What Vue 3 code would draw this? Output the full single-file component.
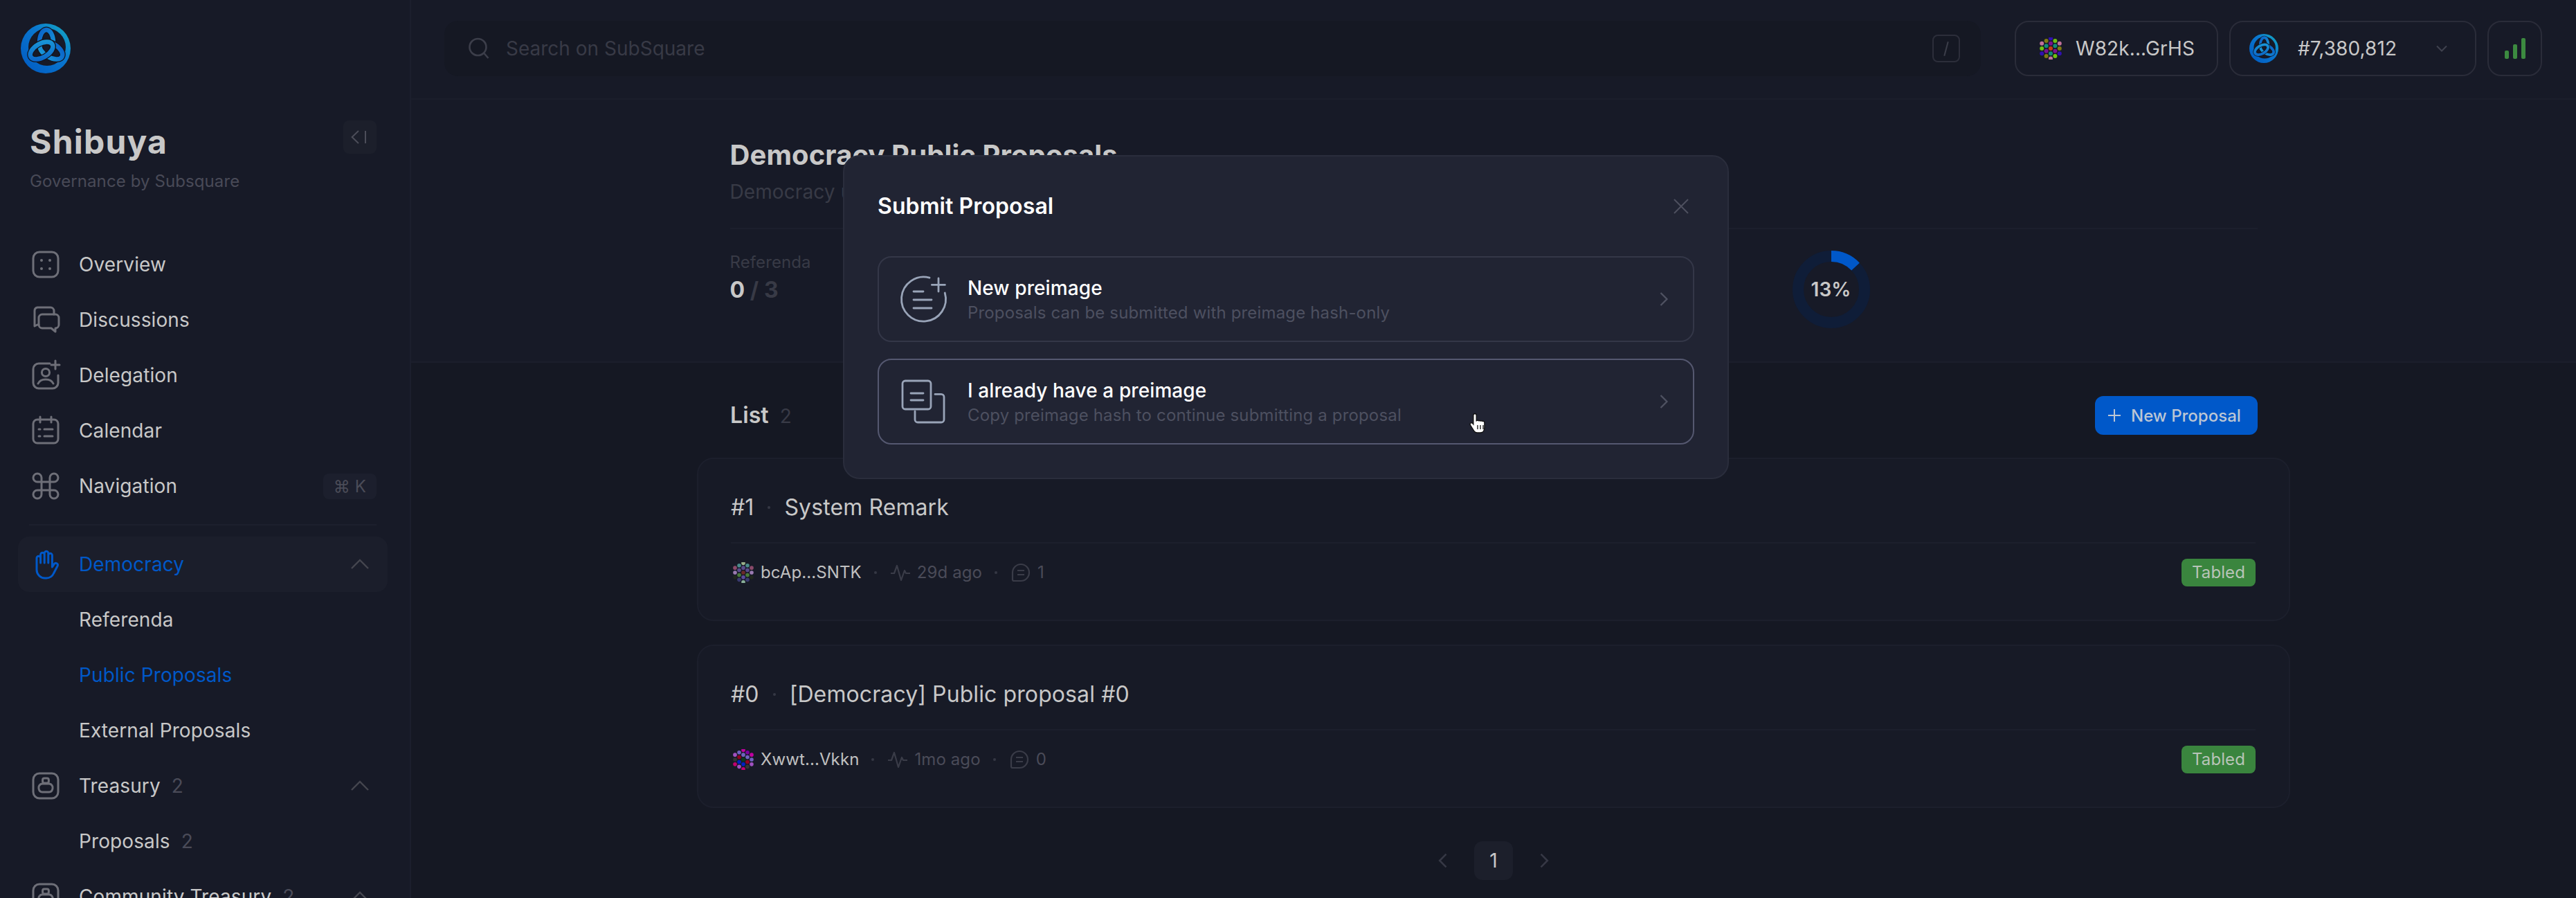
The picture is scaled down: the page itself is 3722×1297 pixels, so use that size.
<template>
  <div class="app">
    <aside class="sidebar">
      <svg class="logo" viewBox="0 0 72 72">
        <defs>
          <linearGradient id="ring" x1="0" y1="1" x2="1" y2="0">
            <stop offset="0" stop-color="#0058c0" />
            <stop offset="0.6" stop-color="#0a78d0" />
            <stop offset="1" stop-color="#16b0c0" />
          </linearGradient>
          <linearGradient id="loop" x1="0" y1="0" x2="1" y2="1">
            <stop offset="0" stop-color="#0a62c8" />
            <stop offset="1" stop-color="#1a9ad8" />
          </linearGradient>
        </defs>
        <path
          fill="url(#ring)" fill-rule="evenodd"
          d="M36 0a36 36 0 1 0 0 72a36 36 0 1 0 0-72ZM38 7a27 27 0 1 1 0 54a27 27 0 1 1 0-54Z"
        />
        <g fill="none">
          <g v-for="a in [0, 120, 240]" :key="a" :transform="`rotate(${a} 37 35)`">
            <ellipse cx="37" cy="27" rx="10" ry="18" stroke="#12141f" stroke-width="9" />
            <ellipse cx="37" cy="27" rx="10" ry="18" stroke="url(#loop)" stroke-width="6.500" />
          </g>
        </g>
      </svg>

      <div class="brand">
        <div>
          <div class="brand-name">Shibuya</div>
          <div class="brand-sub">Governance by Subsquare</div>
        </div>
        <button class="collapse">
          <svg viewBox="0 0 24 24" width="32" height="32" fill="none" stroke="#4c4d59" stroke-width="1.500">
            <path d="M10.500 5.250 3.500 12l7 6.750M18 5.250v13.500" />
          </svg>
        </button>
      </div>

      <nav class="nav">
        <div class="row">
          <svg class="icon" viewBox="0 0 24 24">
            <rect x="3" y="3" width="18" height="18" rx="4.500" />
            <circle cx="9" cy="9" r="1" class="solid" />
            <circle cx="15" cy="9" r="1" class="solid" />
            <circle cx="9" cy="15" r="1" class="solid" />
            <circle cx="15" cy="15" r="1" class="solid" />
          </svg>
          <span>Overview</span>
        </div>
        <div class="row">
          <svg class="icon" viewBox="0 0 24 24">
            <path d="M7 15.500H6l-2 1V5.500A2.500 2.500 0 0 1 6 3h9.500A2.500 2.500 0 0 1 18 5.500V8" />
            <path d="M9.500 8H19a2.500 2.500 0 0 1 2.500 2.500v5A2.500 2.500 0 0 1 19 18v2.500L16 18H9.500A2.500 2.500 0 0 1 7 15.500v-5A2.500 2.500 0 0 1 9.500 8Z" />
          </svg>
          <span>Discussions</span>
        </div>
        <div class="row">
          <svg class="icon" viewBox="0 0 24 24">
            <path d="M15 3.500H7A4 4 0 0 0 3 7.500v10a4 4 0 0 0 4 4h10a4 4 0 0 0 4-4V12" />
            <circle cx="12" cy="10" r="2.800" />
            <path d="M6.500 18c1-2.200 3-3 5.500-3s4.500.8 5.500 3" />
            <path d="M19 1.500v6M16 4.500h6" />
          </svg>
          <span>Delegation</span>
        </div>
        <div class="row">
          <svg class="icon" viewBox="0 0 24 24">
            <rect x="3" y="4" width="18" height="17" rx="3" />
            <path d="M8 2v4M16 2v4M11 11h6M11 16h6M7 11h1M7 16h1" />
          </svg>
          <span>Calendar</span>
        </div>
        <div class="row">
          <svg class="icon" viewBox="0 0 24 24">
            <path d="M15 6v12a3 3 0 1 0 3-3H6a3 3 0 1 0 3 3V6a3 3 0 1 0-3 3h12a3 3 0 1 0-3-3" />
          </svg>
          <span>Navigation</span>
          <span class="kbd">⌘ K</span>
        </div>

        <div class="nav-divider"></div>

        <div class="row active">
          <svg class="icon" viewBox="0 0 24 24">
            <path d="M5.500 15V7.500a1.400 1.400 0 0 1 2.800 0V11M8.300 11V5a1.400 1.400 0 0 1 2.800 0v6M11.100 11V4a1.400 1.400 0 0 1 2.800 0v7M13.900 11V5.500a1.400 1.400 0 0 1 2.800 0V14l1.500-2.300a1.400 1.400 0 0 1 2.400 1.400l-2.800 5.400A6 6 0 0 1 12.500 22h-1A6 6 0 0 1 5.500 16v-1" />
          </svg>
          <span>Democracy</span>
          <svg class="chevron" viewBox="0 0 24 24"><path d="m6 15 6-6 6 6" /></svg>
        </div>
        <div class="row sub">Referenda</div>
        <div class="row sub current">Public Proposals</div>
        <div class="row sub">External Proposals</div>

        <div class="row">
          <svg class="icon" viewBox="0 0 24 24">
            <rect x="3" y="3" width="18" height="18" rx="4.500" />
            <rect x="9.800" y="6.500" width="4.400" height="3.500" rx="1.200" />
            <path d="M9.500 10.500h5a2.800 2.800 0 0 1 2.500 3.500c-.3 1.500-1.200 2.500-2.500 2.500h-5C8.200 16.500 7.300 15.500 7 14a2.800 2.800 0 0 1 2.500-3.500Z" />
          </svg>
          <span>Treasury</span>
          <span class="count">2</span>
          <svg class="chevron" viewBox="0 0 24 24"><path d="m6 15 6-6 6 6" /></svg>
        </div>
        <div class="row sub">Proposals<span class="count">2</span></div>

        <div class="row">
          <svg class="icon" viewBox="0 0 24 24">
            <rect x="3" y="3" width="18" height="18" rx="4.500" />
            <rect x="9.800" y="6.500" width="4.400" height="3.500" rx="1.200" />
            <path d="M9.500 10.500h5a2.800 2.800 0 0 1 2.500 3.500c-.3 1.500-1.200 2.500-2.500 2.500h-5C8.200 16.500 7.300 15.500 7 14a2.800 2.800 0 0 1 2.500-3.500Z" />
          </svg>
          <span>Community Treasury</span>
          <span class="count">2</span>
          <svg class="chevron" viewBox="0 0 24 24"><path d="m6 15 6-6 6 6" /></svg>
        </div>
      </nav>
    </aside>

    <div class="main">
      <header class="topbar">
        <div class="search">
          <svg viewBox="0 0 32 32" width="32" height="32" fill="none" stroke="#3c3e4a" stroke-width="2.600">
            <circle cx="14.500" cy="14" r="12" />
            <path d="m23.500 23 6 7" />
          </svg>
          <span class="search-text">Search on SubSquare</span>
          <span class="slash"><i></i></span>
        </div>
        <div class="top-btn wallet">
          <svg class="avatar-lg" viewBox="0 0 32 32">
            <circle v-for="(d, i) in walletDots" :key="i" :cx="d.x" :cy="d.y" r="3" :fill="d.color" />
          </svg>
          <span>W82k...GrHS</span>
        </div>
        <div class="top-btn node">
          <svg class="node-logo" viewBox="0 0 72 72">
            <path
              fill="url(#ring)" fill-rule="evenodd"
              d="M36 0a36 36 0 1 0 0 72a36 36 0 1 0 0-72ZM38 7a27 27 0 1 1 0 54a27 27 0 1 1 0-54Z"
            />
            <g fill="none">
              <g v-for="a in [0, 120, 240]" :key="a" :transform="`rotate(${a} 37 35)`">
                <ellipse cx="37" cy="27" rx="10" ry="18" stroke="#12141f" stroke-width="9" />
                <ellipse cx="37" cy="27" rx="10" ry="18" stroke="url(#loop)" stroke-width="6.500" />
              </g>
            </g>
          </svg>
          <span>#7,380,812</span>
          <svg class="node-caret" viewBox="0 0 24 24" fill="none" stroke="#3f414e" stroke-width="2">
            <path d="m5 8.500 7 7 7-7" />
          </svg>
        </div>
        <div class="top-btn signal">
          <i style="height: 12px"></i>
          <i style="height: 21px"></i>
          <i style="height: 30px"></i>
        </div>
      </header>

      <section class="hero">
        <div class="hero-inner">
          <h1>Democracy Public Proposals</h1>
          <p class="hero-sub">Democracy uses public proposals, external proposals and referendums.</p>
          <div class="stats">
            <div>
              <div class="stat-label">Referenda</div>
              <div class="stat-value">0<span> / 3</span></div>
            </div>
            <div class="ring">
              <svg viewBox="0 0 112 112" width="112" height="112">
                <circle cx="56" cy="56" r="48" fill="none" stroke="#0f1d38" stroke-width="16" />
                <circle
                  cx="56" cy="56" r="48" fill="none" stroke="#0058c9" stroke-width="16"
                  pathLength="100" stroke-dasharray="13 87" transform="rotate(-90 56 56)"
                />
              </svg>
              <span>13%</span>
            </div>
          </div>
        </div>
      </section>

      <section class="list">
        <div class="list-head">
          <div class="list-title">List<span>2</span></div>
          <button class="new-btn">
            <svg viewBox="0 0 24 24" width="24" height="24" fill="none" stroke="#bcc6d4" stroke-width="2">
              <path d="M12 3v18M3 12h18" />
            </svg>
            New Proposal
          </button>
        </div>

        <article v-for="p in proposals" :key="p.id" class="card">
          <div class="card-title">
            <span>#{{ p.id }}</span><i class="dot"></i><span>{{ p.title }}</span>
          </div>
          <div class="card-meta">
            <svg class="avatar" viewBox="0 0 32 32">
              <circle v-for="(d, i) in p.dots" :key="i" :cx="d.x" :cy="d.y" r="3" :fill="d.color" />
            </svg>
            <span class="author">{{ p.author }}</span>
            <i class="dot"></i>
            <svg class="meta-icon" viewBox="0 0 32 32">
              <path d="M2 17h5l4-11 6 21 5-14 2 4h6" />
            </svg>
            <span>{{ p.time }}</span>
            <i class="dot"></i>
            <svg class="meta-icon" viewBox="0 0 32 32">
              <path d="M16 4a12 12 0 0 1 0 24H6a2 2 0 0 1-2-2V16A12 12 0 0 1 16 4ZM11 13h10M11 19h10" />
            </svg>
            <span>{{ p.comments }}</span>
            <span class="tag">Tabled</span>
          </div>
        </article>

        <div class="pager">
          <svg viewBox="0 0 24 24" width="28" height="28" fill="none" stroke="#363845" stroke-width="2.200">
            <path d="m15 4-8 8 8 8" />
          </svg>
          <span class="page">1</span>
          <svg viewBox="0 0 24 24" width="28" height="28" fill="none" stroke="#363845" stroke-width="2.200">
            <path d="m9 4 8 8-8 8" />
          </svg>
        </div>
      </section>
    </div>

    <div class="modal">
      <div class="modal-head">
        <span>Submit Proposal</span>
        <svg viewBox="0 0 24 24" width="24" height="24" fill="none" stroke="#4e505f" stroke-width="2">
          <path d="m2 2 20 20M22 2 2 22" />
        </svg>
      </div>
      <div class="option">
        <svg class="option-icon" viewBox="0 0 40 40">
          <path d="M24.500 4.600A16 16 0 1 0 35.600 15.500" />
          <path d="M31 5v9.500M26.200 9.700h9.500M13 14.500h7M13 20.500h13M13 26.500h13" />
        </svg>
        <div class="option-text">
          <div class="option-title">New preimage</div>
          <div class="option-sub">Proposals can be submitted with preimage hash-only</div>
        </div>
        <svg class="option-arrow" viewBox="0 0 24 24"><path d="m9 6 6 6-6 6" /></svg>
      </div>
      <div class="option hover">
        <svg class="option-icon" viewBox="0 0 40 40">
          <rect x="5" y="5" width="20.500" height="20.500" rx="2" />
          <path d="M28.500 14.700H33a2 2 0 0 1 2 2V33a2 2 0 0 1-2 2H16a2 2 0 0 1-2-2v-6M11 14h9M11 19h9" />
        </svg>
        <div class="option-text">
          <div class="option-title">I already have a preimage</div>
          <div class="option-sub">Copy preimage hash to continue submitting a proposal</div>
        </div>
        <svg class="option-arrow" viewBox="0 0 24 24"><path d="m9 6 6 6-6 6" /></svg>
      </div>
    </div>

    <svg class="cursor" viewBox="0 0 28 32">
      <path
        d="M9 2.500c1.300 0 2.200 1 2.200 2.200v8l1.300-.4c1-.3 2 0 2.400.5.900-.5 2-.4 2.700.3.900-.5 2.100-.3 2.800.4 1-.4 2.500.3 2.500 1.800v7c0 4-2 7.700-6 7.700h-4.500c-2.200 0-3.600-1-4.700-2.700L2.500 19c-.8-1.300-.4-2.500.5-3 .9-.5 2-.3 2.800.6l1 1.200V4.700C6.800 3.500 7.700 2.500 9 2.500Z"
        fill="#fff" stroke="#111" stroke-width="1.400"
      />
      <path d="M13 19v6M17 19v6M21 19v6" stroke="#111" stroke-width="1.300" />
    </svg>
  </div>
</template>

<script setup>
// Polkadot style identicon: five columns of 3, 4, 5, 4, 3 dots
const columns = [
  { x: 3.2, ys: [8.7, 16, 23.3] },
  { x: 9.6, ys: [5, 12.3, 19.7, 27] },
  { x: 16, ys: [1.4, 8.7, 16, 23.3, 30.6] },
  { x: 22.4, ys: [5, 12.3, 19.7, 27] },
  { x: 28.8, ys: [8.7, 16, 23.3] },
]

function makeDots(colors) {
  const positions = columns.flatMap((c) => c.ys.map((y) => ({ x: c.x, y })))
  return positions.map((p, i) => ({ ...p, color: colors[i] }))
}

const walletDots = makeDots([
  '#c0709a', '#6fc010', '#3010b0',
  '#7f7a10', '#108a78', '#7a1090', '#7f7a10',
  '#3010b0', '#7a1090', '#c83a10', '#108a78', '#c0709a',
  '#6fc010', '#108a78', '#7a1090', '#6fc010',
  '#c0709a', '#7f7a10', '#3010b0',
])

const proposals = [
  {
    id: 1,
    title: 'System Remark',
    author: 'bcAp...SNTK',
    time: '29d ago',
    comments: 1,
    dots: makeDots([
      '#8a4a6a', '#9a7ab0', '#20281c',
      '#4a8a8a', '#5a4a8a', '#4a7a3a', '#3a3a70',
      '#9ab08a', '#5a4a8a', '#6a2a2a', '#5a4a9a', '#8ab09a',
      '#4a8a8a', '#5a4a8a', '#4a7a3a', '#3a3a70',
      '#8a4a6a', '#9a7ab0', '#20281c',
    ]),
  },
  {
    id: 0,
    title: '[Democracy] Public proposal #0',
    author: 'Xwwt...Vkkn',
    time: '1mo ago',
    comments: 0,
    dots: makeDots([
      '#a050c0', '#333333', '#c00070',
      '#7060c0', '#900020', '#0020c0', '#a050c0',
      '#c000a0', '#7060c0', '#0a3a1a', '#0020c0', '#c00070',
      '#7a00a0', '#7060c0', '#900020', '#333333',
      '#c000a0', '#7060c0', '#a050c0',
    ]),
  },
]
</script>

<style>
html,
body {
  margin: 0;
  background: #151823;
}
</style>

<style scoped>
.app {
  position: relative;
  display: flex;
  width: 3722px;
  height: 1297px;
  overflow: hidden;
  background: #151823;
  color: #c8c8c8;
  font-family: Inter, 'Liberation Sans', sans-serif;
  font-size: 28px;
  letter-spacing: 0.1px;
}

/* sidebar */
.sidebar {
  box-sizing: border-box;
  flex: none;
  width: 594px;
  padding: 34px 32px 0 26px;
  background: #171a27;
  border-right: 2px solid #1c1f2d;
}
.logo {
  display: block;
  width: 72px;
  height: 72px;
  margin-left: 4px;
}
.brand {
  display: flex;
  align-items: flex-start;
  justify-content: space-between;
  margin-top: 71px;
  padding: 0 16px 0 17px;
}
.brand-name {
  font-size: 48px;
  font-weight: 700;
  line-height: 56px;
  letter-spacing: 1.2px;
  color: #c8c8c8;
}
.brand-sub {
  margin-top: 13px;
  font-size: 24px;
  line-height: 32px;
  color: #494a57;
}
.collapse {
  display: flex;
  align-items: center;
  justify-content: center;
  width: 48px;
  height: 48px;
  margin-top: -3px;
  padding: 0;
  background: #1c1f2b;
  border: 0;
  border-radius: 8px;
}
.nav {
  margin-top: 64px;
}
.row {
  display: flex;
  align-items: center;
  box-sizing: border-box;
  height: 80px;
  padding: 0 16px;
  line-height: 40px;
  white-space: nowrap;
}
.row .icon {
  flex: none;
  width: 48px;
  height: 48px;
  margin-right: 24px;
  fill: none;
  stroke: #6e6f78;
  stroke-width: 1.5;
  stroke-linecap: round;
  stroke-linejoin: round;
}
.row .icon .solid {
  fill: #6e6f78;
  stroke: none;
}
.row.sub {
  padding-left: 88px;
}
.row.active {
  background: #1b1e2b;
  border-radius: 16px;
  color: #0058c8;
}
.row.active .icon {
  stroke: #0058c8;
}
.nav-divider {
  height: 2px;
  margin: 15px 16px 16px;
  background: #1c1f2d;
}
.row.current {
  color: #0058c8;
}
.count {
  margin-left: 16px;
  color: #4a4b58;
}
.kbd {
  margin-left: auto;
  padding: 0 15px;
  background: #1c1f2d;
  border-radius: 8px;
  font-size: 24px;
  line-height: 37px;
  color: #4b4c58;
}
.chevron {
  flex: none;
  width: 48px;
  height: 48px;
  margin-left: auto;
  fill: none;
  stroke: #45464f;
  stroke-width: 1.2;
}

/* top bar */
.main {
  flex: 1;
  min-width: 0;
}
.topbar {
  display: flex;
  gap: 16px;
  box-sizing: border-box;
  height: 144px;
  padding: 30px 49px 0 48px;
  background: #171a27;
  border-bottom: 2px solid #1b1e2b;
}
.search {
  display: flex;
  align-items: center;
  box-sizing: border-box;
  width: 2220px;
  height: 80px;
  margin-right: 33px;
  padding: 0 30px 0 34px;
  background: #151823;
  border-radius: 20px;
}
.search-text {
  margin-left: 23px;
  letter-spacing: 0;
  color: #383a46;
}
.slash {
  display: flex;
  align-items: center;
  justify-content: center;
  box-sizing: border-box;
  width: 40px;
  height: 40px;
  margin-left: auto;
  border: 2px solid #2c2e3a;
  border-radius: 8px;
}
.slash i {
  width: 2px;
  height: 21px;
  background: #3c3e4a;
  transform: rotate(15deg);
}
.top-btn {
  display: flex;
  align-items: center;
  box-sizing: border-box;
  height: 80px;
  border: 2px solid #2a2c39;
  border-radius: 20px;
}
.wallet {
  gap: 20px;
  width: 294px;
  padding-left: 34px;
}
.avatar-lg {
  width: 32px;
  height: 32px;
}
.node {
  width: 357px;
  padding-left: 27px;
}
.node-logo {
  width: 42px;
  height: 42px;
  margin-right: 28px;
}
.node-caret {
  width: 24px;
  height: 24px;
  margin-left: auto;
  margin-right: 36px;
}
.signal {
  justify-content: center;
  align-items: flex-end;
  gap: 6px;
  width: 79px;
  padding-bottom: 23px;
}
.signal i {
  width: 6px;
  border-radius: 2px;
  background: #3c8a40;
}

/* title block */
.hero {
  box-sizing: border-box;
  height: 380px;
  background: #171a27;
  border-bottom: 2px solid #1b1e2b;
}
.hero-inner {
  width: 2207px;
  margin: 0 auto;
  padding-top: 52px;
}
h1 {
  margin: 0;
  font-size: 40px;
  font-weight: 700;
  line-height: 56px;
  color: #c8c8c8;
}
.hero-sub {
  margin: 5px 0 0;
  padding-bottom: 32px;
  border-bottom: 2px solid #1c1f2d;
  line-height: 40px;
  color: #383a46;
}
.stats {
  display: flex;
  justify-content: space-between;
  align-items: flex-start;
  padding: 28px 560px 0 0;
}
.stat-label {
  font-size: 24px;
  line-height: 40px;
  color: #383a46;
}
.stat-value {
  font-size: 32px;
  font-weight: 700;
  line-height: 40px;
  color: #c8c8c8;
}
.stat-value span {
  color: #383a46;
}
.ring {
  position: relative;
  width: 112px;
  height: 112px;
  margin-top: 3px;
}
.ring svg {
  display: block;
}
.ring span {
  position: absolute;
  inset: 0;
  display: flex;
  align-items: center;
  justify-content: center;
  font-weight: 600;
}

/* list */
.list {
  width: 2302px;
  margin: 0 auto;
  padding-top: 48px;
}
.list-head {
  display: flex;
  align-items: center;
  justify-content: space-between;
  margin: 0 47px 33px 48px;
}
.list-title {
  margin-top: -2px;
  font-size: 32px;
  font-weight: 600;
}
.list-title span {
  margin-left: 16px;
  font-weight: 400;
  font-size: 28px;
  color: #383a46;
}
.new-btn {
  display: flex;
  align-items: center;
  gap: 12px;
  box-sizing: border-box;
  width: 235px;
  height: 56px;
  padding: 0 0 0 16px;
  background: #0058c9;
  border: 0;
  border-radius: 12px;
  font: 500 24px Inter, 'Liberation Sans', sans-serif;
  color: #bcc6d4;
}
.card {
  box-sizing: border-box;
  height: 236px;
  margin-bottom: 34px;
  padding: 46px 48px 0 47px;
  background: #171a26;
  border: 2px solid #1c1f2c;
  border-radius: 24px;
}
.card-title {
  display: flex;
  align-items: center;
  padding-bottom: 26px;
  border-bottom: 2px solid #1c1f2c;
  font-size: 32px;
  line-height: 48px;
}
.card-title .dot {
  margin: 0 20px;
}
.dot {
  flex: none;
  width: 4px;
  height: 4px;
  margin: 0 18px;
  border-radius: 50%;
  background: #363845;
}
.card-meta {
  display: flex;
  align-items: center;
  margin-top: 22px;
  font-size: 24px;
  line-height: 40px;
  color: #4a4b58;
}
.avatar {
  flex: none;
  width: 30px;
  height: 30px;
  margin: 0 10px 0 3px;
}
.author {
  color: #c0c0c0;
}
.meta-icon {
  flex: none;
  width: 32px;
  height: 32px;
  margin-right: 8px;
  fill: none;
  stroke: #3a3c48;
  stroke-width: 2.2;
  stroke-linejoin: round;
}
.tag {
  margin-left: auto;
  padding: 0 15px;
  background: #3a853e;
  border-radius: 8px;
  color: #b8c4b8;
}
.pager {
  display: flex;
  align-items: center;
  justify-content: center;
  gap: 30px;
  margin-top: 48px;
}
.page {
  width: 56px;
  height: 56px;
  background: #1c1f2b;
  border-radius: 12px;
  line-height: 56px;
  text-align: center;
}

/* dialog */
.modal {
  position: absolute;
  top: 224px;
  left: 1218px;
  box-sizing: border-box;
  width: 1280px;
  padding: 48px;
  background: #212433;
  border: 2px solid #2a2d3c;
  border-radius: 24px;
  color: #fff;
}
.modal-head {
  display: flex;
  align-items: center;
  justify-content: space-between;
  padding-right: 7px;
  margin-bottom: 48px;
  font-size: 32px;
  font-weight: 600;
  line-height: 48px;
}
.option {
  display: flex;
  align-items: center;
  box-sizing: border-box;
  height: 124px;
  padding: 0 24px;
  border: 2px solid #343748;
  border-radius: 20px;
}
.option + .option {
  margin-top: 24px;
}
.option.hover {
  border-color: #555870;
}
.option-icon {
  flex: none;
  width: 80px;
  height: 80px;
  margin-right: 24px;
  fill: none;
  stroke: #99a4b8;
  stroke-width: 1.4;
  stroke-linecap: round;
  stroke-linejoin: round;
}
.option-text {
  padding-top: 3px;
}
.option-title {
  font-weight: 500;
  line-height: 36px;
}
.option-sub {
  font-size: 24px;
  line-height: 36px;
  letter-spacing: 0.16px;
  color: #4d5060;
}
.option-arrow {
  flex: none;
  width: 36px;
  height: 36px;
  margin-left: auto;
  fill: none;
  stroke: #4f5262;
  stroke-width: 1.5;
}
.cursor {
  position: absolute;
  top: 595px;
  left: 2122px;
  width: 28px;
  height: 32px;
}
</style>
